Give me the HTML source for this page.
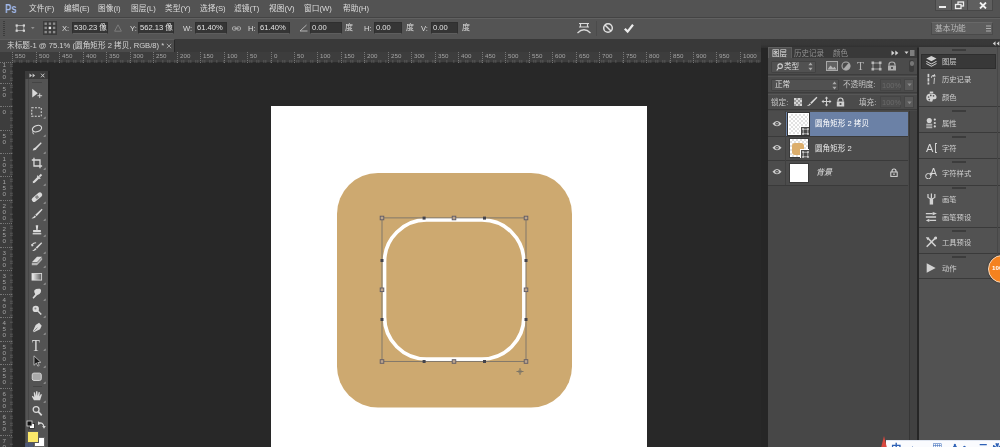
<!DOCTYPE html>
<html lang="zh-CN"><head><meta charset="utf-8"><title>Photoshop</title>
<style>
*{box-sizing:border-box;margin:0;padding:0}
html,body{width:1000px;height:447px;overflow:hidden;background:#282828}
body{position:relative;font-family:"Liberation Sans","Noto Sans CJK SC",sans-serif;font-size:9px;line-height:11px;color:#d2d2d2;-webkit-font-smoothing:antialiased}
.a{position:absolute}
.t{position:absolute;white-space:nowrap}
.t,.in,.rl,.rv,.pi{will-change:transform}
.in{position:absolute;background:#353535;border:1px solid #2f2f2f;border-bottom-color:#5e5e5e;top:22px;height:12px;color:#e4e4e4;font-size:7.6px;line-height:10px;padding-left:1px;overflow:hidden;white-space:nowrap}
.rl{position:absolute;top:52px;height:11px;border-left:1px dotted #777;font-size:6.2px;line-height:7.5px;color:#a4a4a4;padding-left:2px}
.rv{position:absolute;left:0;width:12px;border-top:1px dotted #777;font-size:6.2px;line-height:5.8px;color:#a4a4a4;padding:2px 0 0 2.5px}
.grip{position:absolute;left:952px;width:14px;height:2px;background:#3c3c3c}
.sep{position:absolute;left:919px;width:81px;height:1px;background:#3a3a3a}
.pi{position:absolute;left:942px;font-size:7.3px;color:#d0d0d0;white-space:nowrap}
</style></head><body>

<div class="a" style="left:0;top:0;width:1000px;height:18px;background:#535353"></div>
<div class="a" style="left:0;top:17px;width:1000px;height:1px;background:#444"></div>
<div class="t" style="left:5px;top:1.5px;font-size:12px;line-height:14px;font-weight:bold;color:#a0b8ea;transform:scaleX(.8);transform-origin:0 0">Ps</div>
<div class="t" style="left:28.5px;top:3px;font-size:7.7px;color:#dcdcdc">文件(F)</div>
<div class="t" style="left:63.5px;top:3px;font-size:7.7px;color:#dcdcdc">编辑(E)</div>
<div class="t" style="left:98px;top:3px;font-size:7.7px;color:#dcdcdc">图像(I)</div>
<div class="t" style="left:130.5px;top:3px;font-size:7.7px;color:#dcdcdc">图层(L)</div>
<div class="t" style="left:165px;top:3px;font-size:7.7px;color:#dcdcdc">类型(Y)</div>
<div class="t" style="left:199.5px;top:3px;font-size:7.7px;color:#dcdcdc">选择(S)</div>
<div class="t" style="left:233.5px;top:3px;font-size:7.7px;color:#dcdcdc">滤镜(T)</div>
<div class="t" style="left:268.5px;top:3px;font-size:7.7px;color:#dcdcdc">视图(V)</div>
<div class="t" style="left:304px;top:3px;font-size:7.7px;color:#dcdcdc">窗口(W)</div>
<div class="t" style="left:342.5px;top:3px;font-size:7.7px;color:#dcdcdc">帮助(H)</div>
<div class="a" style="left:935px;top:0;width:58px;height:11px;background:#5f5f5f;border:1px solid #474747;border-top:none"></div>
<div class="a" style="left:951px;top:0;width:1px;height:11px;background:#474747"></div>
<div class="a" style="left:967px;top:0;width:1px;height:11px;background:#474747"></div>
<div class="a" style="left:939px;top:6px;width:7px;height:2px;background:#eee"></div>
<svg class="a" style="left:954px;top:1px" width="11" height="9" viewBox="0 0 11 9"><rect x="4" y="1" width="5.5" height="4" fill="none" stroke="#eee" stroke-width="1.3"/><rect x="1.5" y="3.5" width="5.5" height="4" fill="#5f5f5f" stroke="#eee" stroke-width="1.3"/></svg>
<svg class="a" style="left:979px;top:2px" width="8" height="7" viewBox="0 0 8 7"><path d="M1 0.5 L7 6.5 M7 0.5 L1 6.5" stroke="#f2f2f2" stroke-width="1.8"/></svg>
<div class="a" style="left:0;top:18px;width:1000px;height:21px;background:#545454"></div>
<div class="a" style="left:0;top:18px;width:1000px;height:1px;background:#616161"></div>
<div class="a" style="left:3px;top:21px;width:2px;height:15px;border-left:1px dotted #3c3c3c;border-right:1px dotted #3c3c3c"></div>
<svg class="a" style="left:14px;top:22px" width="24" height="12" viewBox="0 0 24 12"><rect x="2.8" y="3.6" width="7" height="5" fill="none" stroke="#b4b4b4" stroke-width="0.9"/><rect x="1.6" y="2.4" width="2.2" height="2.2" fill="#d4d4d4"/><rect x="8.8" y="2.4" width="2.2" height="2.2" fill="#d4d4d4"/><rect x="1.6" y="7.6" width="2.2" height="2.2" fill="#d4d4d4"/><rect x="8.8" y="7.6" width="2.2" height="2.2" fill="#d4d4d4"/><path d="M17 5 L20.6 5 L18.8 7.3 Z" fill="#909090"/></svg>
<svg class="a" style="left:43px;top:21px" width="14" height="14" viewBox="0 0 14 14"><rect x="0" y="0" width="14" height="14" fill="#3c3c3c"/><rect x="1.5" y="1.5" width="2.4" height="2.4" fill="#8c8c8c"/><rect x="1.5" y="5.7" width="2.4" height="2.4" fill="#8c8c8c"/><rect x="1.5" y="9.9" width="2.4" height="2.4" fill="#8c8c8c"/><rect x="5.7" y="1.5" width="2.4" height="2.4" fill="#8c8c8c"/><rect x="5.7" y="5.7" width="2.4" height="2.4" fill="#e8e8e8"/><rect x="5.7" y="9.9" width="2.4" height="2.4" fill="#8c8c8c"/><rect x="9.9" y="1.5" width="2.4" height="2.4" fill="#8c8c8c"/><rect x="9.9" y="5.7" width="2.4" height="2.4" fill="#8c8c8c"/><rect x="9.9" y="9.9" width="2.4" height="2.4" fill="#8c8c8c"/></svg>
<div class="t" style="left:62px;top:22.5px;font-size:7.6px;color:#dcdcdc">X:</div>
<div class="in" style="left:72px;width:36px">530.23 像素</div>
<svg class="a" style="left:114px;top:24px" width="8" height="8" viewBox="0 0 8 8"><path d="M4 0.8 L7.4 7.2 L0.6 7.2 Z" fill="none" stroke="#808080" stroke-width="0.9"/></svg>
<div class="t" style="left:130px;top:22.5px;font-size:7.6px;color:#dcdcdc">Y:</div>
<div class="in" style="left:138px;width:36px">562.13 像素</div>
<div class="t" style="left:183px;top:22.5px;font-size:7.6px;color:#dcdcdc">W:</div>
<div class="in" style="left:195px;width:32px">61.40%</div>
<svg class="a" style="left:232px;top:26px" width="9" height="5" viewBox="0 0 9 5"><rect x="0.5" y="0.8" width="3.6" height="3.4" rx="1.2" fill="none" stroke="#a8a8a8"/><rect x="4.9" y="0.8" width="3.6" height="3.4" rx="1.2" fill="none" stroke="#a8a8a8"/><path d="M2.5 2.5 H6.5" stroke="#a8a8a8"/></svg>
<div class="t" style="left:248px;top:22.5px;font-size:7.6px;color:#dcdcdc">H:</div>
<div class="in" style="left:258px;width:32px">61.40%</div>
<svg class="a" style="left:299px;top:24px" width="9" height="8" viewBox="0 0 9 8"><path d="M7.5 1 L1 7 L8.5 7" fill="none" stroke="#b4b4b4" stroke-width="1"/></svg>
<div class="in" style="left:310px;width:32px">0.00</div>
<div class="t" style="left:345px;top:22px;font-size:8px;color:#dcdcdc">度</div>
<div class="t" style="left:364px;top:22.5px;font-size:7.6px;color:#dcdcdc">H:</div>
<div class="in" style="left:374px;width:28px">0.00</div>
<div class="t" style="left:405.5px;top:22px;font-size:8px;color:#dcdcdc">度</div>
<div class="t" style="left:421px;top:22.5px;font-size:7.6px;color:#dcdcdc">V:</div>
<div class="in" style="left:431px;width:27px">0.00</div>
<div class="t" style="left:462px;top:22px;font-size:8px;color:#dcdcdc">度</div>
<svg class="a" style="left:576px;top:21px" width="16" height="14" viewBox="0 0 16 14"><path d="M3 2.5 H13 M3 6 H13 M4.5 2.5 V6 M11.5 2.5 V6" stroke="#d8d8d8" stroke-width="1.2" fill="none"/><path d="M1.5 12 Q8 5.5 14.5 12" stroke="#d8d8d8" stroke-width="1.2" fill="none"/></svg>
<div class="a" style="left:596px;top:21px;width:1px;height:15px;background:#4b4b4b"></div>
<svg class="a" style="left:602px;top:22px" width="12" height="12" viewBox="0 0 12 12"><circle cx="6" cy="6" r="4.3" fill="none" stroke="#e0e0e0" stroke-width="1.5"/><path d="M3 3 L9 9" stroke="#e0e0e0" stroke-width="1.5"/></svg>
<svg class="a" style="left:623px;top:22px" width="12" height="12" viewBox="0 0 12 12"><path d="M1.8 6.8 L4.6 9.6 L10 2.8" fill="none" stroke="#ececec" stroke-width="2.2"/></svg>
<div class="a" style="left:931px;top:22px;width:62px;height:13px;background:#5d5d5d;border:1px solid #4a4a4a;border-top-color:#686868"></div>
<div class="t" style="left:935px;top:23px;font-size:7.7px;color:#b8b8b8">基本功能</div>
<svg class="a" style="left:986px;top:25px" width="5" height="8" viewBox="0 0 5 8"><path d="M0 1 H5 M0 3.5 H5 M0 6 H5" stroke="#b0b0b0" stroke-width="1"/></svg>
<div class="a" style="left:0;top:39px;width:763px;height:13px;background:#393939"></div>
<div class="a" style="left:0;top:39px;width:175px;height:13px;background:#4b4b4b;border-top:1px solid #5c5c5c;border-right:1px solid #2a2a2a"></div>
<div class="t" style="left:7px;top:40px;font-size:7.65px;color:#d4d4d4">未标题-1 @ 75.1% (圆角矩形 2 拷贝, RGB/8) *</div>
<svg class="a" style="left:166px;top:43px" width="6" height="6" viewBox="0 0 6 6"><path d="M0.8 0.8 L5.2 5.2 M5.2 0.8 L0.8 5.2" stroke="#a8a8a8" stroke-width="0.9"/></svg>
<div class="a" style="left:0;top:52px;width:763px;height:11px;background:#3d3d3d;border-bottom:1px solid #2c2c2c"></div>
<div class="a" style="left:0;top:63px;width:13px;height:384px;background:#3d3d3d;border-right:1px solid #2c2c2c"></div>
<div class="rl" style="left:12.3px">550</div>
<div class="rl" style="left:35.8px">500</div>
<div class="rl" style="left:59.3px">450</div>
<div class="rl" style="left:82.7px">400</div>
<div class="rl" style="left:106.2px">350</div>
<div class="rl" style="left:129.7px">300</div>
<div class="rl" style="left:153.2px">250</div>
<div class="rl" style="left:176.6px">200</div>
<div class="rl" style="left:200.1px">150</div>
<div class="rl" style="left:223.6px">100</div>
<div class="rl" style="left:247.0px">50</div>
<div class="rl" style="left:270.5px">0</div>
<div class="rl" style="left:294.0px">50</div>
<div class="rl" style="left:317.4px">100</div>
<div class="rl" style="left:340.9px">150</div>
<div class="rl" style="left:364.4px">200</div>
<div class="rl" style="left:387.9px">250</div>
<div class="rl" style="left:411.3px">300</div>
<div class="rl" style="left:434.8px">350</div>
<div class="rl" style="left:458.3px">400</div>
<div class="rl" style="left:481.7px">450</div>
<div class="rl" style="left:505.2px">500</div>
<div class="rl" style="left:528.7px">550</div>
<div class="rl" style="left:552.1px">600</div>
<div class="rl" style="left:575.6px">650</div>
<div class="rl" style="left:599.1px">700</div>
<div class="rl" style="left:622.5px">750</div>
<div class="rl" style="left:646.0px">800</div>
<div class="rl" style="left:669.5px">850</div>
<div class="rl" style="left:693.0px">900</div>
<div class="rl" style="left:716.4px">950</div>
<div class="rl" style="left:739.9px">1000</div>
<div class="rl" style="left:763.4px">1050</div>
<div class="a" style="left:12px;top:60px;width:754px;height:3px;background:repeating-linear-gradient(90deg,#7a7a7a 0,#7a7a7a 0.6px,transparent 0.6px,transparent 2.347px);background-position:0.33px 0;opacity:.45"></div>
<div class="rv" style="top:59.1px;height:23.5px">1<br>0<br>0</div>
<div class="rv" style="top:82.5px;height:23.5px">5<br>0</div>
<div class="rv" style="top:106.0px;height:23.5px">0</div>
<div class="rv" style="top:129.5px;height:23.5px">5<br>0</div>
<div class="rv" style="top:152.9px;height:23.5px">1<br>0<br>0</div>
<div class="rv" style="top:176.4px;height:23.5px">1<br>5<br>0</div>
<div class="rv" style="top:199.9px;height:23.5px">2<br>0<br>0</div>
<div class="rv" style="top:223.3px;height:23.5px">2<br>5<br>0</div>
<div class="rv" style="top:246.8px;height:23.5px">3<br>0<br>0</div>
<div class="rv" style="top:270.3px;height:23.5px">3<br>5<br>0</div>
<div class="rv" style="top:293.8px;height:23.5px">4<br>0<br>0</div>
<div class="rv" style="top:317.2px;height:23.5px">4<br>5<br>0</div>
<div class="rv" style="top:340.7px;height:23.5px">5<br>0<br>0</div>
<div class="rv" style="top:364.2px;height:23.5px">5<br>5<br>0</div>
<div class="rv" style="top:387.6px;height:23.5px">6<br>0<br>0</div>
<div class="rv" style="top:411.1px;height:23.5px">6<br>5<br>0</div>
<div class="rv" style="top:434.6px;height:23.5px">7<br>0<br>0</div>
<div class="a" style="left:10px;top:63px;width:3px;height:384px;background:repeating-linear-gradient(180deg,#7a7a7a 0,#7a7a7a 0.6px,transparent 0.6px,transparent 2.347px);background-position:0 0.75px;opacity:.45"></div>
<div class="a" style="left:0;top:52px;width:13px;height:11px;background:#3d3d3d;border-right:1px dotted #777;border-bottom:1px dotted #777"></div>
<div class="a" style="left:270.5px;top:106px;width:376.5px;height:341px;background:#fff"></div>
<svg class="a" style="left:300px;top:150px" width="300" height="280" viewBox="300 150 300 280">
<rect x="337" y="173" width="235" height="234.5" rx="41" ry="41" fill="#cda970"/>
<rect x="384.5" y="219.9" width="139.4" height="139.2" rx="42" ry="42" fill="none" stroke="#fff" stroke-width="3.7"/>
<g fill="none" stroke="#74706a" stroke-width="0.85"><rect x="382" y="217.9" width="144" height="143.5"/></g>
<g fill="#bca58c" stroke="#5f5b66" stroke-width="0.9">
<rect x="380.2" y="216.2" width="3.6" height="3.6"/><rect x="452.2" y="216.2" width="3.6" height="3.6"/><rect x="524.2" y="216.2" width="3.6" height="3.6"/>
<rect x="380.2" y="288" width="3.6" height="3.6"/><rect x="524.2" y="288" width="3.6" height="3.6"/>
<rect x="380.2" y="359.7" width="3.6" height="3.6"/><rect x="452.2" y="359.7" width="3.6" height="3.6"/><rect x="524.2" y="359.7" width="3.6" height="3.6"/>
</g>
<g fill="#44444c">
<rect x="422.6" y="216.6" width="3" height="3"/><rect x="483" y="216.6" width="3" height="3"/>
<rect x="422.6" y="360" width="3" height="3"/><rect x="483" y="360" width="3" height="3"/>
<rect x="380.5" y="259" width="3" height="3"/><rect x="380.5" y="318" width="3" height="3"/>
<rect x="524.5" y="259" width="3" height="3"/><rect x="524.5" y="318" width="3" height="3"/>
</g>
<path d="M516.5 371.5 H523.5 M520 368 V375" stroke="#7d7566" stroke-width="1" fill="none"/><circle cx="520" cy="371.5" r="1.6" fill="none" stroke="#7d7566" stroke-width="0.7"/>
</svg>
<div class="a" style="left:25px;top:70.5px;width:23px;height:8.5px;background:#3b3b3b"></div>
<div class="a" style="left:25px;top:79px;width:23px;height:368px;background:#535353;border-left:1px solid #474747"></div>
<svg class="a" style="left:28.5px;top:72.5px" width="17" height="5" viewBox="0 0 17 5"><path d="M0.5 0.5 L3 2.5 L0.5 4.5 Z M3.6 0.5 L6.1 2.5 L3.6 4.5 Z" fill="#c8c8c8"/><path d="M12 0.7 L15.4 4.3 M15.4 0.7 L12 4.3" stroke="#c8c8c8" stroke-width="1"/></svg>
<div class="a" style="left:31.5px;top:81.5px;width:10px;height:1.5px;background:#444"></div>
<div class="a" style="left:27.5px;top:79px;width:1px;height:368px;background:#474747"></div>
<div class="a" style="left:48px;top:71px;width:2px;height:376px;background:#222"></div>
<svg class="a" style="left:26.5px;top:86px" width="22" height="17" viewBox="0 0 22 17"><g transform="translate(9.8 8) scale(0.86) translate(-9.8 -8)"><path d="M4.5 2 L4.5 12 L11 7 Z" fill="#dadada"/><path d="M10.5 10 H16 M13.2 7.3 V12.7" stroke="#dadada" stroke-width="1.1"/></g></svg>
<svg class="a" style="left:26.5px;top:104px" width="22" height="17" viewBox="0 0 22 17"><g transform="translate(9.8 8) scale(0.95) translate(-9.8 -8)"><rect x="4.5" y="3.5" width="10" height="9" fill="none" stroke="#dadada" stroke-width="1.1" stroke-dasharray="2 1.4"/></g><path d="M16.2 14.8 L18.6 14.8 L18.6 12.4 Z" fill="#9c9c9c"/></svg>
<svg class="a" style="left:26.5px;top:122px" width="22" height="17" viewBox="0 0 22 17"><g transform="translate(9.8 8) scale(0.95) translate(-9.8 -8)"><ellipse cx="10" cy="6.5" rx="5" ry="3.2" fill="none" stroke="#dadada" stroke-width="1.2" transform="rotate(-18 10 6.5)"/><path d="M6 9 Q5 11 6.5 12.5" fill="none" stroke="#dadada" stroke-width="1"/></g><path d="M16.2 14.8 L18.6 14.8 L18.6 12.4 Z" fill="#9c9c9c"/></svg>
<svg class="a" style="left:26.5px;top:139px" width="22" height="17" viewBox="0 0 22 17"><g transform="translate(9.8 8) scale(0.86) translate(-9.8 -8)"><path d="M5 12 Q5.5 9 8 8.5 L14.5 2.5 L15.5 3.5 L9.5 10 Q9 12 5 12 Z" fill="#dadada"/></g><path d="M16.2 14.8 L18.6 14.8 L18.6 12.4 Z" fill="#9c9c9c"/></svg>
<svg class="a" style="left:26.5px;top:155px" width="22" height="17" viewBox="0 0 22 17"><g transform="translate(9.8 8) scale(0.86) translate(-9.8 -8)"><path d="M6.5 2 V11.5 H16 M4 4.5 H13.5 V14" fill="none" stroke="#dadada" stroke-width="1.5"/></g><path d="M16.2 14.8 L18.6 14.8 L18.6 12.4 Z" fill="#9c9c9c"/></svg>
<svg class="a" style="left:26.5px;top:170.5px" width="22" height="17" viewBox="0 0 22 17"><g transform="translate(9.8 8) scale(0.86) translate(-9.8 -8)"><path d="M5 13 L5.6 10.6 L11 5.2 L12.8 7 L7.4 12.4 Z" fill="#dadada"/><path d="M10.3 4.2 L13.8 7.7" stroke="#dadada" stroke-width="1.4"/><path d="M12 4.5 L14.5 2 L16 3.5 L13.5 6 Z" fill="#dadada"/></g><path d="M16.2 14.8 L18.6 14.8 L18.6 12.4 Z" fill="#9c9c9c"/></svg>
<svg class="a" style="left:26.5px;top:188.5px" width="22" height="17" viewBox="0 0 22 17"><g transform="translate(9.8 8) scale(0.86) translate(-9.8 -8)"><rect x="3" y="5.5" width="14" height="5.4" rx="2.4" fill="#dadada" transform="rotate(-40 10 8.2)"/><rect x="8.2" y="6.4" width="3.6" height="3.6" fill="#888" transform="rotate(-40 10 8.2)"/></g><path d="M16.2 14.8 L18.6 14.8 L18.6 12.4 Z" fill="#9c9c9c"/></svg>
<svg class="a" style="left:26.5px;top:206px" width="22" height="17" viewBox="0 0 22 17"><g transform="translate(9.8 8) scale(0.86) translate(-9.8 -8)"><path d="M15.5 2 L16.5 3 L9.5 10.5 L8 9 Z" fill="#dadada"/><path d="M7.3 9.6 L9 11.2 Q7 13.6 3.6 13 Q5.8 12 7.3 9.6 Z" fill="#dadada"/></g><path d="M16.2 14.8 L18.6 14.8 L18.6 12.4 Z" fill="#9c9c9c"/></svg>
<svg class="a" style="left:26.5px;top:222px" width="22" height="17" viewBox="0 0 22 17"><g transform="translate(9.8 8) scale(0.86) translate(-9.8 -8)"><path d="M8.6 2.5 H11.4 V3 L10.8 8 H14.5 V10.6 H5.5 V8 H9.2 L8.6 3 Z" fill="#dadada"/><rect x="5" y="11.6" width="10" height="1.5" fill="#dadada"/></g><path d="M16.2 14.8 L18.6 14.8 L18.6 12.4 Z" fill="#9c9c9c"/></svg>
<svg class="a" style="left:26.5px;top:239px" width="22" height="17" viewBox="0 0 22 17"><g transform="translate(9.8 8) scale(0.86) translate(-9.8 -8)"><path d="M15 2.5 L16 3.5 L10 10 L8.6 8.6 Z" fill="#dadada"/><path d="M8 9.2 L9.5 10.7 Q7.5 13 4.4 12.4 Q6.6 11.4 8 9.2 Z" fill="#dadada"/><path d="M4 6.5 Q5 3 9 3" fill="none" stroke="#dadada" stroke-width="1.2"/><path d="M3 4.6 L4.2 7.6 L6.4 5.6 Z" fill="#dadada"/></g><path d="M16.2 14.8 L18.6 14.8 L18.6 12.4 Z" fill="#9c9c9c"/></svg>
<svg class="a" style="left:26.5px;top:253px" width="22" height="17" viewBox="0 0 22 17"><g transform="translate(9.8 8) scale(0.86) translate(-9.8 -8)"><path d="M4 9.5 L10 3 H16 L10 9.5 Z" fill="#dadada"/><path d="M4 10.3 H10 L16 3.8 V6.5 L10 13 H4 Z" fill="#b5b5b5"/></g><path d="M16.2 14.8 L18.6 14.8 L18.6 12.4 Z" fill="#9c9c9c"/></svg>
<svg class="a" style="left:26.5px;top:271.8px" width="22" height="14" viewBox="0 0 22 14"><defs><linearGradient id="gg" x1="0" x2="1"><stop offset="0" stop-color="#f4f4f4"/><stop offset="1" stop-color="#5a5a5a"/></linearGradient></defs><rect x="5" y="1.5" width="9.6" height="6.6" fill="url(#gg)" stroke="#d8d8d8" stroke-width="0.9"/><path d="M16.2 12.8 L18.6 12.8 L18.6 10.4 Z" fill="#9c9c9c"/></svg>
<svg class="a" style="left:26.5px;top:286px" width="22" height="17" viewBox="0 0 22 17"><g transform="translate(9.8 8) scale(0.86) translate(-9.8 -8)"><path d="M7 3.5 Q9 1.5 13.5 2 Q15.5 3 14.5 6 Q13 9 10 9.5 L6 13.5 L4.8 12.4 L8 8.2 Q6 6 7 3.5 Z" fill="#dadada"/></g><path d="M16.2 14.8 L18.6 14.8 L18.6 12.4 Z" fill="#9c9c9c"/></svg>
<svg class="a" style="left:26.5px;top:302.5px" width="22" height="17" viewBox="0 0 22 17"><g transform="translate(9.8 8) scale(0.86) translate(-9.8 -8)"><circle cx="8.6" cy="5.6" r="3.7" fill="#dadada"/><circle cx="8.2" cy="5.2" r="1.2" fill="#8a8a8a"/><path d="M11 8 L15 12" stroke="#dadada" stroke-width="1.8"/></g><path d="M16.2 14.8 L18.6 14.8 L18.6 12.4 Z" fill="#9c9c9c"/></svg>
<svg class="a" style="left:26.5px;top:320px" width="22" height="17" viewBox="0 0 22 17"><g transform="translate(9.8 8) scale(0.86) translate(-9.8 -8)"><path d="M12.5 2 L15.5 5.4 L13.5 9.5 L6.5 13 L5.2 11.8 L8.5 4.5 Z" fill="#dadada"/><path d="M6 12.3 L10.5 7.6" stroke="#666" stroke-width="0.8"/></g><path d="M16.2 14.8 L18.6 14.8 L18.6 12.4 Z" fill="#9c9c9c"/></svg>
<div class="t" style="left:32px;top:337px;font-family:'Liberation Serif',serif;font-size:16px;line-height:17px;color:#dedede;transform:scaleX(.8);transform-origin:0 0">T</div>
<svg class="a" style="left:27px;top:336px" width="22" height="17" viewBox="0 0 22 17"><path d="M16.2 14.8 L18.6 14.8 L18.6 12.4 Z" fill="#9c9c9c"/></svg>
<svg class="a" style="left:26.5px;top:353px" width="22" height="17" viewBox="0 0 22 17"><g transform="translate(9.8 8) scale(0.86) translate(-9.8 -8)"><path d="M6.5 2 L6.5 13 L9.3 10.4 L11 14 L12.6 13.2 L11 9.8 L14.5 9.5 Z" fill="#1c1c1c" stroke="#cfcfcf" stroke-width="0.9"/></g><path d="M16.2 14.8 L18.6 14.8 L18.6 12.4 Z" fill="#9c9c9c"/></svg>
<svg class="a" style="left:26.5px;top:369px" width="22" height="17" viewBox="0 0 22 17"><g transform="translate(9.8 8) scale(0.86) translate(-9.8 -8)"><rect x="4.5" y="3.5" width="10.5" height="8.5" rx="2" fill="#a9a9a9" stroke="#dadada" stroke-width="1.1"/></g><path d="M16.2 14.8 L18.6 14.8 L18.6 12.4 Z" fill="#9c9c9c"/></svg>
<div class="a" style="left:33px;top:386px;width:9px;height:1px;background:#444"></div>
<svg class="a" style="left:26.5px;top:388px" width="22" height="17" viewBox="0 0 22 17"><g transform="translate(9.8 8) scale(0.86) translate(-9.8 -8)"><path d="M6.5 13 L4 8.5 L5 7.8 L6.8 9.5 L6.2 3.8 L7.6 3.6 L8.6 8 L9 2.6 L10.5 2.6 L10.8 8 L12 3.4 L13.4 3.7 L12.8 8.6 L14.6 5.6 L15.8 6.2 L13.6 13 Z" fill="#dadada"/></g><path d="M16.2 14.8 L18.6 14.8 L18.6 12.4 Z" fill="#9c9c9c"/></svg>
<svg class="a" style="left:26.5px;top:403.3px" width="22" height="17" viewBox="0 0 22 17"><g transform="translate(9.8 8) scale(0.86) translate(-9.8 -8)"><circle cx="9" cy="6.2" r="3.4" fill="none" stroke="#dadada" stroke-width="1.5"/><path d="M11.5 8.8 L15.5 13" stroke="#dadada" stroke-width="2"/></g></svg>
<svg class="a" style="left:26px;top:419px" width="22" height="12" viewBox="0 0 22 12"><rect x="3.5" y="4.5" width="5" height="5" fill="#fff" stroke="#222" stroke-width="0.8"/><rect x="1" y="2" width="5" height="5" fill="#111" stroke="#ddd" stroke-width="0.8"/><path d="M13 4 Q17 3 18 8" fill="none" stroke="#d8d8d8" stroke-width="1.1"/><path d="M12 2.2 L12 6 L15 4.4 Z M16.2 7 L19.8 7 L18 9.8 Z" fill="#d8d8d8"/></svg>
<div class="a" style="left:34px;top:437px;width:11px;height:10px;background:#fff;border:1px solid #666"></div>
<div class="a" style="left:27px;top:431px;width:12px;height:12px;background:#fbe86a;border:1px solid #5a5a5a"></div>
<div class="a" style="left:25px;top:443px;width:8px;height:4px;background:#4a5a8a;opacity:.6"></div>
<div class="a" style="left:761px;top:39px;width:239px;height:408px;background:#262626"></div>
<div class="a" style="left:761px;top:39px;width:239px;height:8.5px;background:linear-gradient(#393939,#373737 60%,#2e2e2e)"></div>
<div class="a" style="left:767.8px;top:47px;width:149.2px;height:400px;background:#474747"></div>
<div class="a" style="left:768px;top:47px;width:149px;height:11px;background:#393939"></div>
<div class="a" style="left:768px;top:47px;width:24px;height:11px;background:#4e4e4e;border:1px solid #5e5e5e;border-bottom:none"></div>
<div class="t" style="left:771.5px;top:47.5px;font-size:7.5px;color:#e6e6e6">图层</div>
<div class="t" style="left:794px;top:47.5px;font-size:7.5px;color:#909090">历史记录</div>
<div class="t" style="left:833px;top:47.5px;font-size:7.5px;color:#909090">颜色</div>
<svg class="a" style="left:891px;top:50px" width="8" height="6" viewBox="0 0 8 6"><path d="M0.5 0.5 L3.5 3 L0.5 5.5 Z M4.3 0.5 L7.3 3 L4.3 5.5 Z" fill="#d4d4d4"/></svg>
<svg class="a" style="left:904px;top:50px" width="11" height="6" viewBox="0 0 11 6"><path d="M0.5 1.5 L4.5 1.5 L2.5 4 Z" fill="#d4d4d4"/><path d="M6 1 H10.5 M6 3 H10.5 M6 5 H10.5" stroke="#d4d4d4" stroke-width="0.9"/></svg>
<div class="a" style="left:768px;top:58px;width:149px;height:17px;background:#4b4b4b;border-bottom:1px solid #3d3d3d"></div>
<div class="a" style="left:770.5px;top:60.5px;width:45.5px;height:12px;background:#515151;border:1px solid #424242;border-radius:1px"></div>
<svg class="a" style="left:775.5px;top:62.5px" width="7.5" height="8.5" viewBox="0 0 8 9"><circle cx="4.4" cy="3.3" r="2.4" fill="none" stroke="#d4d4d4" stroke-width="1.1"/><path d="M2.8 5.2 L0.8 8" stroke="#d4d4d4" stroke-width="1.2"/></svg>
<div class="t" style="left:784px;top:61px;font-size:7.6px;color:#d8d8d8">类型</div>
<svg class="a" style="left:808px;top:62px" width="5" height="9" viewBox="0 0 5 9"><path d="M2.5 0.5 L4.6 3.2 H0.4 Z M2.5 8.5 L4.6 5.8 H0.4 Z" fill="#a8a8a8"/></svg>
<svg class="a" style="left:826px;top:61px" width="12" height="10" viewBox="0 0 12 10"><rect x="0.5" y="0.5" width="11" height="9" fill="#626262" stroke="#a8a8a8" stroke-width="1"/><path d="M1.5 8.5 L4.5 4.5 L7 7 L8.5 5.8 L10.5 8.5 Z" fill="#b4b4b4"/></svg>
<svg class="a" style="left:841px;top:61px" width="10" height="10" viewBox="0 0 10 10"><circle cx="5" cy="5" r="4" fill="none" stroke="#ababab" stroke-width="1.1"/><path d="M5 1 A4 4 0 0 1 5 9 Z" fill="#ababab" transform="rotate(40 5 5)"/></svg>
<div class="t" style="left:856.5px;top:59.5px;font-family:'Liberation Serif',serif;font-size:11.5px;line-height:12px;color:#b4b4b4">T</div>
<svg class="a" style="left:871px;top:61px" width="11" height="10" viewBox="0 0 11 10"><rect x="2" y="2" width="7" height="6" fill="none" stroke="#a4a4a4" stroke-width="1"/><rect x="0.5" y="0.5" width="2.6" height="2.6" fill="#b8b8b8"/><rect x="7.9" y="0.5" width="2.6" height="2.6" fill="#b8b8b8"/><rect x="0.5" y="6.9" width="2.6" height="2.6" fill="#b8b8b8"/><rect x="7.9" y="6.9" width="2.6" height="2.6" fill="#b8b8b8"/></svg>
<svg class="a" style="left:887px;top:61px" width="10" height="10" viewBox="0 0 10 10"><path d="M2 4.5 V3.5 Q2 1 5 1 Q8 1 8 3.5 V4.5" fill="none" stroke="#adadad" stroke-width="1.2"/><rect x="1" y="4.5" width="8" height="5" fill="#adadad"/><rect x="4" y="6" width="2" height="2" fill="#555"/></svg>
<div class="a" style="left:909px;top:60px;width:5px;height:12px;background:#3c3c3c;border-radius:2px"></div><div class="a" style="left:909.5px;top:60.5px;width:4px;height:5px;background:#777;border-radius:2px"></div>
<div class="a" style="left:768px;top:76px;width:149px;height:17px;background:#4b4b4b;border-top:1px solid #565656;border-bottom:1px solid #3d3d3d"></div>
<div class="a" style="left:770.5px;top:78.5px;width:68.5px;height:12px;background:#515151;border:1px solid #424242;border-radius:1px"></div>
<div class="t" style="left:775px;top:79px;font-size:7.6px;color:#dedede">正常</div>
<svg class="a" style="left:832px;top:80.5px" width="5" height="9" viewBox="0 0 5 9"><path d="M2.5 0.5 L4.6 3.2 H0.4 Z M2.5 8.5 L4.6 5.8 H0.4 Z" fill="#a8a8a8"/></svg>
<div class="t" style="left:842.5px;top:79px;font-size:7.6px;color:#c4c4c4">不透明度:</div>
<div class="a" style="left:880px;top:78.5px;width:21px;height:12px;background:#4e4e4e;border:1px solid #454545"></div>
<div class="t" style="left:882px;top:79.5px;font-size:7.5px;color:#6a6a6a">100%</div>
<div class="a" style="left:904px;top:78.5px;width:10px;height:12px;background:#595959;border:1px solid #454545"></div>
<svg class="a" style="left:906.5px;top:83px" width="5" height="4" viewBox="0 0 5 4"><path d="M0.3 0.5 H4.7 L2.5 3.3 Z" fill="#8a8a8a"/></svg>
<div class="a" style="left:768px;top:94px;width:149px;height:16px;background:#4b4b4b;border-top:1px solid #565656;border-bottom:1px solid #3a3a3a"></div>
<div class="t" style="left:771px;top:96.5px;font-size:7.6px;color:#c8c8c8">锁定:</div>
<svg class="a" style="left:793px;top:97px" width="10" height="10" viewBox="0 0 10 10"><rect x="1" y="1" width="8" height="8" fill="#9a9a9a"/><path d="M1 1h2v2h-2zM5 1h2v2h-2zM3 3h2v2h-2zM7 3h2v2h-2zM1 5h2v2h-2zM5 5h2v2h-2zM3 7h2v2h-2zM7 7h2v2h-2z" fill="#d4d4d4"/></svg>
<svg class="a" style="left:806px;top:96px" width="12" height="11" viewBox="0 0 12 11"><path d="M10.5 0.8 L11.4 1.7 L5.5 8 L4.2 6.8 Z" fill="#d8d8d8"/><path d="M3.7 7.4 L5 8.6 Q3.4 10.4 0.8 10 Q2.6 9.2 3.7 7.4 Z" fill="#d8d8d8"/></svg>
<svg class="a" style="left:821px;top:96px" width="11" height="11" viewBox="0 0 11 11"><path d="M5.5 0.5 L7.3 2.6 H6 V5 H8.4 V3.7 L10.5 5.5 L8.4 7.3 V6 H6 V8.4 H7.3 L5.5 10.5 L3.7 8.4 H5 V6 H2.6 V7.3 L0.5 5.5 L2.6 3.7 V5 H5 V2.6 H3.7 Z" fill="#cfcfcf"/></svg>
<svg class="a" style="left:836px;top:97px" width="9" height="10" viewBox="0 0 9 10"><path d="M2 4.5 V3.5 Q2 1 4.5 1 Q7 1 7 3.5 V4.5" fill="none" stroke="#d0d0d0" stroke-width="1.2"/><rect x="0.8" y="4.5" width="7.4" height="5" fill="#d0d0d0"/><rect x="3.6" y="6" width="1.8" height="2" fill="#555"/></svg>
<div class="t" style="left:859px;top:96.5px;font-size:7.6px;color:#c8c8c8">填充:</div>
<div class="a" style="left:880px;top:96px;width:21px;height:12px;background:#4e4e4e;border:1px solid #454545"></div>
<div class="t" style="left:882px;top:97px;font-size:7.5px;color:#6a6a6a">100%</div>
<div class="a" style="left:904px;top:96px;width:10px;height:12px;background:#595959;border:1px solid #454545"></div>
<svg class="a" style="left:906.5px;top:100.5px" width="5" height="4" viewBox="0 0 5 4"><path d="M0.3 0.5 H4.7 L2.5 3.3 Z" fill="#8a8a8a"/></svg>
<div class="a" style="left:768px;top:111px;width:140px;height:74px;background:#4c4c4c"></div>
<div class="a" style="left:908.5px;top:111px;width:8.5px;height:336px;background:#414141;border-left:1px solid #363636"></div>
<div class="a" style="left:785px;top:111.5px;width:123px;height:24px;background:#6b81a6"></div>
<div class="a" style="left:768px;top:135.5px;width:140px;height:1px;background:#3a3a3a"></div>
<div class="a" style="left:768px;top:160px;width:140px;height:1px;background:#3a3a3a"></div>
<div class="a" style="left:768px;top:184.5px;width:140px;height:1px;background:#3a3a3a"></div>
<div class="a" style="left:785px;top:111px;width:1px;height:74px;background:#414141"></div>
<svg class="a" style="left:772px;top:120px" width="10" height="7.3" viewBox="0 0 11 8"><path d="M0.5 4 Q5.5 -1.6 10.5 4 Q5.5 9.6 0.5 4 Z" fill="#d0d0d0"/><circle cx="5.5" cy="4" r="1.9" fill="#3c3c3c"/><circle cx="5.5" cy="4" r="0.8" fill="#d0d0d0"/></svg>
<svg class="a" style="left:772px;top:143.8px" width="10" height="7.3" viewBox="0 0 11 8"><path d="M0.5 4 Q5.5 -1.6 10.5 4 Q5.5 9.6 0.5 4 Z" fill="#d0d0d0"/><circle cx="5.5" cy="4" r="1.9" fill="#3c3c3c"/><circle cx="5.5" cy="4" r="0.8" fill="#d0d0d0"/></svg>
<svg class="a" style="left:772px;top:168px" width="10" height="7.3" viewBox="0 0 11 8"><path d="M0.5 4 Q5.5 -1.6 10.5 4 Q5.5 9.6 0.5 4 Z" fill="#d0d0d0"/><circle cx="5.5" cy="4" r="1.9" fill="#3c3c3c"/><circle cx="5.5" cy="4" r="0.8" fill="#d0d0d0"/></svg>
<div class="a" style="left:787.5px;top:113px;width:21.5px;height:21.5px;border:1px solid #fff;outline:1px solid #333;background-color:#fff;background-image:linear-gradient(45deg,#e2e2e2 25%,transparent 25%,transparent 75%,#e2e2e2 75%),linear-gradient(45deg,#e2e2e2 25%,transparent 25%,transparent 75%,#e2e2e2 75%);background-size:4px 4px;background-position:0 0,2px 2px"></div>
<div class="a" style="left:800px;top:125.5px;width:9px;height:9px;background:#4a4a4a;border-left:1px solid #fff;border-top:1px solid #fff"></div>
<svg class="a" style="left:802px;top:127.5px" width="7" height="7" viewBox="0 0 7 7"><rect x="1.2" y="1.2" width="4.6" height="4.6" fill="none" stroke="#bbb" stroke-width="0.9"/><rect x="0.2" y="0.2" width="1.6" height="1.6" fill="#ddd"/><rect x="5.2" y="0.2" width="1.6" height="1.6" fill="#ddd"/><rect x="0.2" y="5.2" width="1.6" height="1.6" fill="#ddd"/><rect x="5.2" y="5.2" width="1.6" height="1.6" fill="#ddd"/></svg>
<div class="t" style="left:814.5px;top:118px;font-size:7.6px;color:#fff">圆角矩形 2 拷贝</div>
<div class="a" style="left:788.5px;top:138px;width:20.5px;height:20px;border:1px solid #3a3a3a;background-color:#fff;background-image:linear-gradient(45deg,#e2e2e2 25%,transparent 25%,transparent 75%,#e2e2e2 75%),linear-gradient(45deg,#e2e2e2 25%,transparent 25%,transparent 75%,#e2e2e2 75%);background-size:4px 4px;background-position:0 0,2px 2px"></div>
<div class="a" style="left:792px;top:142.5px;width:12px;height:12px;background:#dcae6c;border-radius:3px"></div>
<div class="a" style="left:800px;top:149px;width:9px;height:9px;background:#4a4a4a;border-left:1px solid #fff;border-top:1px solid #fff"></div>
<svg class="a" style="left:802px;top:151px" width="7" height="7" viewBox="0 0 7 7"><rect x="1.2" y="1.2" width="4.6" height="4.6" fill="none" stroke="#bbb" stroke-width="0.9"/><rect x="0.2" y="0.2" width="1.6" height="1.6" fill="#ddd"/><rect x="5.2" y="0.2" width="1.6" height="1.6" fill="#ddd"/><rect x="0.2" y="5.2" width="1.6" height="1.6" fill="#ddd"/><rect x="5.2" y="5.2" width="1.6" height="1.6" fill="#ddd"/></svg>
<div class="t" style="left:814.5px;top:142.5px;font-size:7.6px;color:#e6e6e6">圆角矩形 2</div>
<div class="a" style="left:788.5px;top:162.5px;width:20.5px;height:20.5px;background:#fff;border:1px solid #3a3a3a"></div>
<div class="t" style="left:816px;top:167px;font-size:8px;font-style:italic;color:#e6e6e6">背景</div>
<svg class="a" style="left:890px;top:168px" width="8" height="9" viewBox="0 0 8 9"><path d="M2 4 V3 Q2 1 4 1 Q6 1 6 3 V4" fill="none" stroke="#d8d8d8" stroke-width="1.1"/><rect x="0.8" y="4" width="6.4" height="4.4" fill="none" stroke="#d8d8d8" stroke-width="1"/><rect x="3.4" y="5.4" width="1.2" height="1.6" fill="#d8d8d8"/></svg>
<div class="a" style="left:919px;top:47px;width:81px;height:400px;background:#525252"></div>
<svg class="a" style="left:992px;top:40.5px" width="8" height="5" viewBox="0 0 8 5"><path d="M3.5 0.3 L0.8 2.5 L3.5 4.7 Z M7.3 0.3 L4.6 2.5 L7.3 4.7 Z" fill="#d0d0d0"/></svg>
<div class="a" style="left:921px;top:53.5px;width:75px;height:15px;background:#383838;border:1px solid #2e2e2e"></div>
<div class="grip" style="top:48.5px"></div>
<div class="grip" style="top:109.5px"></div>
<div class="grip" style="top:135.5px"></div>
<div class="grip" style="top:160.5px"></div>
<div class="grip" style="top:187px"></div>
<div class="grip" style="top:230px"></div>
<div class="grip" style="top:255.5px"></div>
<div class="sep" style="top:106px"></div>
<div class="sep" style="top:131.5px"></div>
<div class="sep" style="top:158px"></div>
<div class="sep" style="top:184.5px"></div>
<div class="sep" style="top:227px"></div>
<div class="sep" style="top:252.5px"></div>
<div class="sep" style="top:277.5px"></div>
<div class="a" style="left:996.5px;top:47px;width:1px;height:232px;background:#474747"></div>
<svg class="a" style="left:924.5px;top:55px" width="12.8" height="12" viewBox="0 0 15 14"><path d="M7.5 1 L13.5 4.2 L7.5 7.4 L1.5 4.2 Z" fill="#d2d2d2"/><path d="M1.5 6.8 L7.5 10 L13.5 6.8 L13.5 8 L7.5 11.2 L1.5 8 Z" fill="#d2d2d2"/><path d="M1.5 9.4 L7.5 12.6 L13.5 9.4 L13.5 10.4 L7.5 13.6 L1.5 10.4 Z" fill="#d2d2d2"/></svg>
<div class="pi" style="top:55.5px">图层</div>
<svg class="a" style="left:924.5px;top:73px" width="12.8" height="12" viewBox="0 0 15 14"><rect x="3" y="1" width="2" height="4" fill="#d2d2d2"/><rect x="3" y="6" width="2" height="4" fill="#d2d2d2"/><rect x="3" y="11" width="2" height="2.5" fill="#d2d2d2"/><path d="M7.5 5.5 Q8 2 11.5 3.2 L10.8 1.4 M11.5 3.2 L9.6 4" fill="none" stroke="#d2d2d2" stroke-width="1.2"/><path d="M10.5 5.5 L11.6 5.5 L11 12.8 L10 12.8 Z" fill="#d2d2d2"/></svg>
<div class="pi" style="top:73.5px">历史记录</div>
<svg class="a" style="left:924.5px;top:91px" width="12.8" height="12" viewBox="0 0 15 14"><path d="M7.2 3 Q13 3 13.6 7 Q13.6 10 10.5 9.6 Q8.8 9.4 9 11 Q9 12.6 6.5 12.4 Q1.4 12 1.4 7.6 Q1.6 3.2 7.2 3 Z" fill="#d2d2d2"/><circle cx="4.2" cy="7" r="1" fill="#535353"/><circle cx="6.8" cy="5.2" r="1" fill="#535353"/><circle cx="10" cy="5.6" r="1" fill="#535353"/><circle cx="5" cy="10" r="1" fill="#535353"/><rect x="5.6" y="0.6" width="4" height="2" fill="#d2d2d2"/></svg>
<div class="pi" style="top:92px">颜色</div>
<svg class="a" style="left:924.5px;top:117px" width="12.8" height="12" viewBox="0 0 15 14"><circle cx="5" cy="4" r="3" fill="#d2d2d2"/><path d="M1.5 8.5 H8.5 M1.5 10.5 H8.5 M1.5 12.5 H8.5" stroke="#d2d2d2" stroke-width="1.1"/><circle cx="11.5" cy="3" r="1.3" fill="#d2d2d2"/><circle cx="11.5" cy="7" r="1.3" fill="#d2d2d2"/><circle cx="11.5" cy="11" r="1.3" fill="#d2d2d2"/></svg>
<div class="pi" style="top:118px">属性</div>
<div class="t" style="left:926px;top:141.5px;font-size:11px;line-height:12px;color:#d8d8d8">A</div><div class="a" style="left:934.5px;top:143px;width:2.5px;height:10px;border:1px solid #d0d0d0;border-right:none"></div>
<div class="pi" style="top:142.5px">字符</div>
<div class="t" style="left:929.5px;top:165.5px;font-size:10.5px;line-height:12px;color:#d8d8d8">A</div><svg class="a" style="left:925px;top:171.5px" width="7.5" height="7.5" viewBox="0 0 9 9"><circle cx="4" cy="5" r="3.2" fill="none" stroke="#d8d8d8" stroke-width="1.2"/><path d="M6 1 L8.5 3.5" stroke="#d8d8d8" stroke-width="1.3"/></svg>
<div class="pi" style="top:168px">字符样式</div>
<svg class="a" style="left:924.5px;top:193px" width="12.8" height="12" viewBox="0 0 15 14"><rect x="5.5" y="7" width="4" height="6.5" fill="#d2d2d2"/><path d="M3.5 1 V5.5 M7.5 0.5 V6 M11.5 1 V5.5" stroke="#d2d2d2" stroke-width="1.4"/><path d="M3.5 5 Q7.5 8.5 11.5 5" fill="none" stroke="#d2d2d2" stroke-width="1.2"/></svg>
<div class="pi" style="top:193.5px">画笔</div>
<svg class="a" style="left:924.5px;top:211px" width="12.8" height="12" viewBox="0 0 15 14"><path d="M1 3 H9 M1 7 H13 M5 11 H13" stroke="#d2d2d2" stroke-width="1.5"/><path d="M9 1 L14 3 L9 5 Z" fill="#d2d2d2"/><path d="M5 9 L1 11 L5 13 Z" fill="#d2d2d2"/></svg>
<div class="pi" style="top:212px">画笔预设</div>
<svg class="a" style="left:924.5px;top:236px" width="12.8" height="12" viewBox="0 0 15 14"><path d="M2 12.5 L12 2.5 M3 2 L12.5 12" stroke="#d2d2d2" stroke-width="1.8"/><path d="M1 1 L5 2 L3 5 Z" fill="#d2d2d2"/><circle cx="12.4" cy="2.4" r="1.8" fill="#d2d2d2"/></svg>
<div class="pi" style="top:237px">工具预设</div>
<svg class="a" style="left:924.5px;top:262px" width="12.8" height="12" viewBox="0 0 15 14"><path d="M2 1.5 L12.5 7 L2 12.5 Z" fill="#d2d2d2"/></svg>
<div class="pi" style="top:263px">动作</div>
<div class="a" style="left:987.8px;top:254.8px;width:28.6px;height:28.6px;border-radius:50%;background:#f4821f;border:1.6px solid #f9dcc0;box-shadow:0 0 1.5px #2a2a2a"></div>
<div class="t" style="left:992px;top:264px;font-size:6.2px;line-height:8px;font-weight:bold;color:#fff">100</div>
<div class="a" style="left:886px;top:439.5px;width:120px;height:12px;background:#fafbfe;border-top:1px solid #dfe5f0"></div>
<div class="a" style="left:880.5px;top:436px;width:0;height:0;border-left:3.5px solid transparent;border-right:3.5px solid transparent;border-bottom:12px solid #d9483f"></div>
<div class="t" style="left:891px;top:441.8px;font-size:10.5px;line-height:12px;font-weight:bold;color:#2f62b6">中</div>
<div class="t" style="left:910px;top:441.8px;font-size:10.5px;line-height:12px;font-weight:bold;color:#2f62b6">♪</div>
<div class="t" style="left:918.5px;top:441.8px;font-size:10.5px;line-height:12px;font-weight:bold;color:#2f62b6">，</div>
<div class="t" style="left:932px;top:441.8px;font-size:10.5px;line-height:12px;font-weight:bold;color:#2f62b6">▦</div>
<div class="t" style="left:950px;top:441.8px;font-size:10.5px;line-height:12px;font-weight:bold;color:#2f62b6">♟</div>
<div class="t" style="left:961px;top:441.8px;font-size:10.5px;line-height:12px;font-weight:bold;color:#2f62b6">♣</div>
<div class="t" style="left:977.5px;top:441.8px;font-size:10.5px;line-height:12px;font-weight:bold;color:#2f62b6">〒</div>
<div class="t" style="left:992px;top:441.8px;font-size:10.5px;line-height:12px;font-weight:bold;color:#2f62b6">✿</div>
</body></html>
